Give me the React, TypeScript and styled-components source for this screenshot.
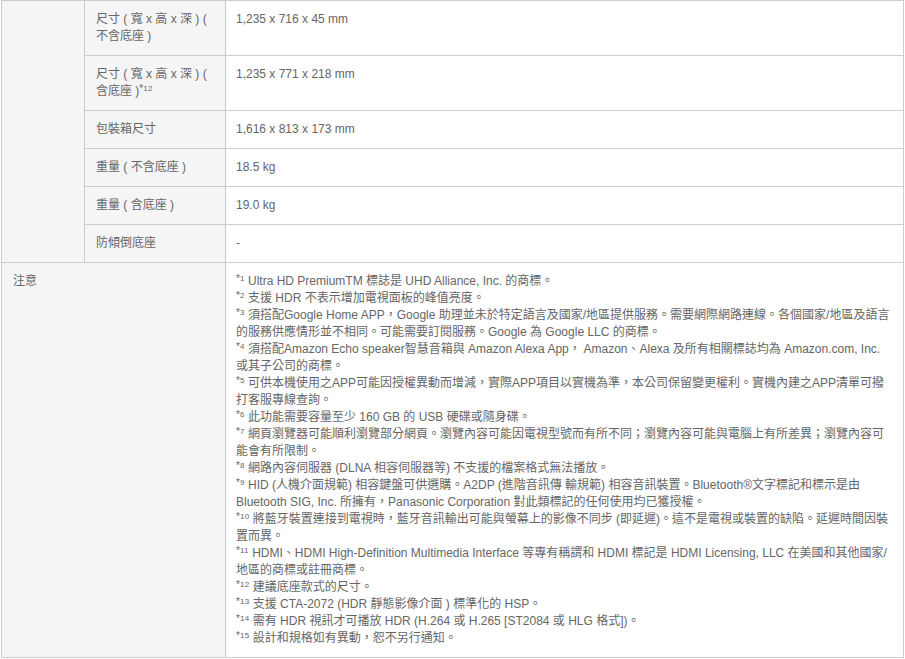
import React, { FC } from 'react';
import styled, { createGlobalStyle } from 'styled-components';

const GlobalStyle = createGlobalStyle`
    html, body {
        margin: 0;
        padding: 0;
        background: #fff;
    }
`;

const SpecTable = styled.table`
    width: 903px;
    margin-left: 1px;
    border-collapse: collapse;
    table-layout: fixed;
    font-family: "Liberation Sans", "Noto Sans CJK TC", sans-serif;
    font-size: 12px;
    line-height: 17px;
    color: #666;
`;

const Column = styled.col<{ $width?: number }>`
    width: ${props => (props.$width ? `${props.$width}px` : 'auto')};
`;

const Cell = styled.td`
    border: 1px solid #ccc;
    padding: 10px 11px;
    vertical-align: top;
    white-space: nowrap;
`;

const ShadedCell = styled(Cell)`
    background: #f5f5f5;
`;

const ValueCell = styled(Cell)`
    background: #fff;
    padding-left: 10px;
`;

const NoteLine = styled.div``;

const Star = styled.span`
    font-size: 10px;
    line-height: 0;
    vertical-align: 3px;
`;

const Note = styled.span`
    font-size: 8px;
    line-height: 0;
    letter-spacing: 0.3px;
    vertical-align: 4px;
`;

const specRows: { label: React.ReactNode; value: string }[] = [
    { label: <>尺寸 ( 寬 x 高 x 深 ) (<br />不含底座 )</>, value: '1,235 x 716 x 45 mm' },
    { label: <>尺寸 ( 寬 x 高 x 深 ) (<br />含底座 )<Star>*</Star><Note>12</Note></>, value: '1,235 x 771 x 218 mm' },
    { label: '包裝箱尺寸', value: '1,616 x 813 x 173 mm' },
    { label: '重量 ( 不含底座 )', value: '18.5 kg' },
    { label: '重量 ( 含底座 )', value: '19.0 kg' },
    { label: '防傾倒底座', value: '-' },
];

// [footnote number, text lines]
const notes: [number, string[]][] = [
    [1, [' Ultra HD PremiumTM 標誌是 UHD Alliance, Inc. 的商標。']],
    [2, [' 支援 HDR 不表示增加電視面板的峰值亮度。']],
    [3, [' 須搭配Google Home APP，Google 助理並未於特定語言及國家/地區提供服務。需要網際網路連線。各個國家/地區及語言', '的服務供應情形並不相同。可能需要訂閱服務。Google 為 Google LLC 的商標。']],
    [4, [' 須搭配Amazon Echo speaker智慧音箱與 Amazon Alexa App， Amazon、Alexa 及所有相關標誌均為 Amazon.com, Inc.', '或其子公司的商標。']],
    [5, [' 可供本機使用之APP可能因授權異動而增減，實際APP項目以實機為準，本公司保留變更權利。實機內建之APP清單可撥', '打客服專線查詢。']],
    [6, [' 此功能需要容量至少 160 GB 的 USB 硬碟或隨身碟。']],
    [7, [' 網頁瀏覽器可能順利瀏覽部分網頁。瀏覽內容可能因電視型號而有所不同；瀏覽內容可能與電腦上有所差異；瀏覽內容可', '能會有所限制。']],
    [8, [' 網路內容伺服器 (DLNA 相容伺服器等) 不支援的檔案格式無法播放。']],
    [9, [' HID (人機介面規範) 相容鍵盤可供選購。A2DP (進階音訊傳 輸規範) 相容音訊裝置。Bluetooth®文字標記和標示是由', 'Bluetooth SIG, Inc. 所擁有，Panasonic Corporation 對此類標記的任何使用均已獲授權。']],
    [10, [' 將藍牙裝置連接到電視時，藍牙音訊輸出可能與螢幕上的影像不同步 (即延遲)。這不是電視或裝置的缺陷。延遲時間因裝', '置而異。']],
    [11, [' HDMI、HDMI High-Definition Multimedia Interface 等專有稱謂和 HDMI 標記是 HDMI Licensing, LLC 在美國和其他國家/', '地區的商標或註冊商標。']],
    [12, [' 建議底座款式的尺寸。']],
    [13, [' 支援 CTA-2072 (HDR 靜態影像介面 ) 標準化的 HSP。']],
    [14, [' 需有 HDR 視訊才可播放 HDR (H.264 或 H.265 [ST2084 或 HLG 格式])。']],
    [15, [' 設計和規格如有異動，恕不另行通知。']],
];

const App: FC = () => (
    <>
        <GlobalStyle />
        <SpecTable lang="zh-TW">
            <colgroup>
                <Column $width={83} />
                <Column $width={141} />
                <Column />
            </colgroup>
            <tbody>
                {specRows.map((row, i) => (
                    <tr key={i}>
                        {i === 0 && <ShadedCell rowSpan={specRows.length} />}
                        <ShadedCell>{row.label}</ShadedCell>
                        <ValueCell>{row.value}</ValueCell>
                    </tr>
                ))}
                <tr>
                    <ShadedCell colSpan={2}>注意</ShadedCell>
                    <ValueCell>
                        {notes.map(([num, lines]) => (
                            <NoteLine key={num}>
                                <Star>*</Star>
                                <Note>{num}</Note>
                                {lines.map((line, i) => (
                                    <React.Fragment key={i}>
                                        {i > 0 && <br />}
                                        {line}
                                    </React.Fragment>
                                ))}
                            </NoteLine>
                        ))}
                    </ValueCell>
                </tr>
            </tbody>
        </SpecTable>
    </>
);

export default App;
